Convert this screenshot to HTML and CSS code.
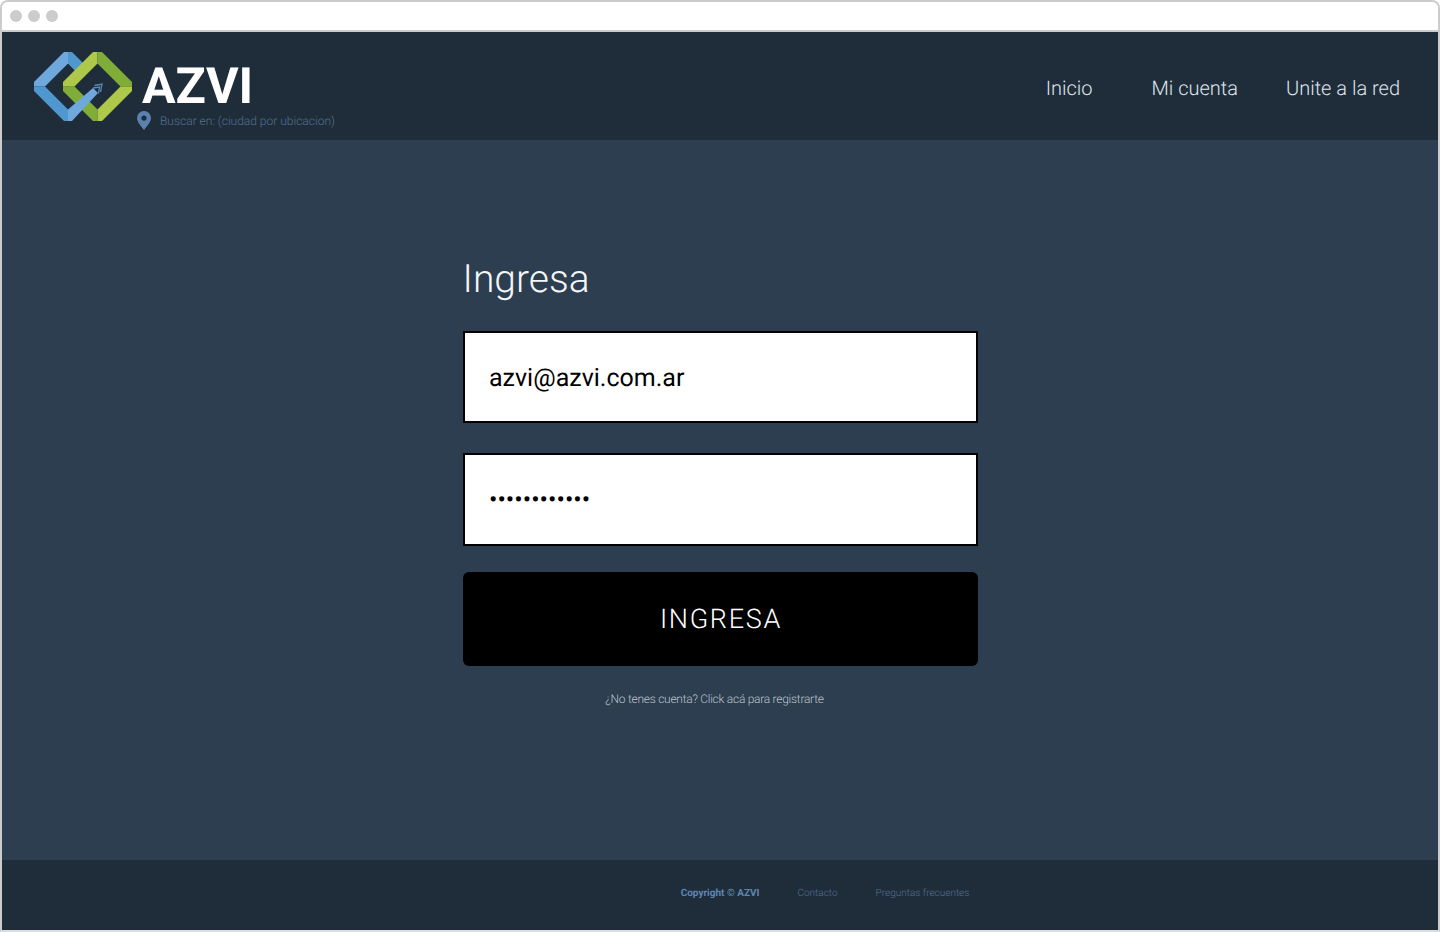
FILE: index.html
```html
<!DOCTYPE html>
<html lang="en">
<head>
    <meta charset="UTF-8">
    <meta name="viewport" content="width=device-width, initial-scale=1.0">
    <title>AZVI - Ingresa</title>
    <link rel="stylesheet" href="styles.css">
</head>
<body>
    <div class="window">
        <div class="window-bar">
            <span class="window-dot"></span>
            <span class="window-dot"></span>
            <span class="window-dot"></span>
        </div>

        <div class="header">
            <div class="brand">
                <svg class="brand-logo" width="98" height="69" viewBox="0 0 98 69">
                    <polygon fill="#4f97cf" points="34,0 38,0 54,16 45,23 34,11.5"/>
                    <polygon fill="#6fa8dc" points="0,30 30,0 34,0 34,11.5 11,34.5 0,34.5"/>
                    <polygon fill="#4f97cf" points="0,34.5 11,34.5 34,57.5 34,69 30,69 0,39"/>
                    <polygon fill="#80ad38" points="29,34.5 40.5,34.5 63.5,57.5 63.5,69 59,69 29,39"/>
                    <polygon fill="#aec94a" points="29,30 59,0 63.5,0 63.5,11.5 40.5,34.5 29,34.5"/>
                    <polygon fill="#80ad38" points="63.5,0 68,0 98,30 98,34.5 86.5,34.5 63.5,11.5"/>
                    <polygon fill="#aec94a" points="98,34.5 98,39 68,69 63.5,69 63.5,57.5 86.5,34.5"/>
                    <polygon fill="#6fa8dc" points="34,57.5 59,36 64,41 38,69 34,69"/>
                    <path fill="none" stroke="#5b8ab8" stroke-width="1.3" d="M60.5 33.5L68 32l-1.500 8M59 36l6.500-1-1 6.500"/>
                </svg>
                <div class="brand-text">
                    <div class="brand-name">AZVI</div>
                    <div class="brand-location">
                        <svg class="pin" width="14" height="19" viewBox="0 0 14 19">
                            <path fill="#5b82ad" fill-rule="evenodd" d="M7 0a7 7 0 0 1 7 7c0 4-4 8-7 12C4 15 0 11 0 7a7 7 0 0 1 7-7zm0 4.500a2.600 2.600 0 1 0 0 5.200 2.600 2.600 0 0 0 0-5.200z"/>
                        </svg>
                        <span>Buscar en: (ciudad por ubicacion)</span>
                    </div>
                </div>
            </div>
            <div class="nav">
                <a class="nav-link nav-link-first" href="#">Inicio</a>
                <a class="nav-link" href="#">Mi cuenta</a>
                <a class="nav-link" href="#">Unite a la red</a>
            </div>
        </div>

        <div class="main">
            <form class="login">
                <h1 class="login-title">Ingresa</h1>
                <input class="login-input" type="text" value="azvi@azvi.com.ar">
                <input class="login-input login-input-pass" type="password" value="azviazviazvi">
                <button class="login-button" type="submit">INGRESA</button>
                <a class="login-note" href="#">¿No tenes cuenta? Click acá para registrarte</a>
            </form>
        </div>

        <div class="footer">
            <span class="footer-copy">Copyright © AZVI</span>
            <a class="footer-link" href="#">Contacto</a>
            <a class="footer-link" href="#">Preguntas frecuentes</a>
        </div>
    </div>
</body>
</html>
```

FILE: styles.css
```css
* {
    box-sizing: border-box;
}
body {
    font-family: "Roboto", sans-serif;
    text-rendering: geometricPrecision;
    background-color: #fff;
    margin: 0;
    padding: 0;
}
.window {
    width: 1440px;
    height: 932px;
    display: flex;
    flex-direction: column;
    border: 2px solid #ccc;
    border-bottom-color: #ddd;
    border-radius: 8px 8px 0 0;
    overflow: hidden;
}
.window-bar {
    height: 30px;
    flex-shrink: 0;
    display: flex;
    gap: 6px;
    padding: 8px 0 0 8px;
    background-color: #fff;
    border-bottom: 2px solid #ccc;
}
.window-dot {
    width: 12px;
    height: 12px;
    border-radius: 50%;
    background-color: #ccc;
}
.header {
    height: 108px;
    flex-shrink: 0;
    display: flex;
    justify-content: space-between;
    background-color: #1f2d3b;
    padding: 20px 38px 0 32px;
}
.brand {
    display: flex;
    gap: 5px;
}
.brand-logo {
    display: block;
}
.brand-name {
    font-size: 50px;
    font-weight: 700;
    line-height: 58px;
    margin: 6px 0 0 5px;
    color: #fff;
}
.brand-location {
    display: flex;
    align-items: center;
    gap: 9px;
    font-size: 12px;
    font-weight: 300;
    color: #54708e;
    margin-top: -5px;
}
.nav {
    display: flex;
    gap: 48px;
    padding-top: 23px;
}
.nav-link {
    font-size: 20px;
    font-weight: 300;
    line-height: 26px;
    color: #dfe4ea;
    text-decoration: none;
}
.nav-link-first {
    margin-right: 11px;
}
.main {
    flex: 1;
    display: flex;
    justify-content: center;
    background-color: #2d3e50;
    padding-top: 114px;
}
.login {
    width: 515px;
    display: flex;
    flex-direction: column;
}
.login-title {
    font-size: 39px;
    font-weight: 300;
    line-height: 50px;
    margin: 0 0 27px;
    color: #f4f6f8;
}
.login-input {
    height: 92px;
    width: 100%;
    font-family: "Roboto", sans-serif;
    text-rendering: geometricPrecision;
    font-size: 25px;
    color: #000;
    background-color: #fff;
    border: 2px solid #000;
    border-radius: 0;
    padding: 2px 24px 0 24.5px;
    margin-bottom: 30px;
    outline: none;
}
.login-input-pass {
    height: 93px;
    margin-bottom: 26px;
}
.login-button {
    height: 94px;
    font-family: "Roboto", sans-serif;
    text-rendering: geometricPrecision;
    font-size: 27px;
    font-weight: 300;
    letter-spacing: 1.7px;
    color: #fff;
    background-color: #000;
    border: none;
    border-radius: 6px;
    padding-left: 8px;
    cursor: pointer;
}
.login-note {
    font-size: 12px;
    font-weight: 300;
    line-height: 16px;
    letter-spacing: -0.27px;
    color: #bcc4cd;
    text-decoration: none;
    text-align: center;
    margin: 25px 11px 0 0;
}
.footer {
    height: 70px;
    flex-shrink: 0;
    display: flex;
    align-items: center;
    justify-content: center;
    gap: 38px;
    background-color: #1f2d3b;
    font-size: 10px;
    padding: 0 0 4px 210px;
}
.footer-copy {
    font-weight: 700;
    color: #5f87b3;
}
.footer-link {
    font-weight: 300;
    color: #54708e;
    text-decoration: none;
}
```
